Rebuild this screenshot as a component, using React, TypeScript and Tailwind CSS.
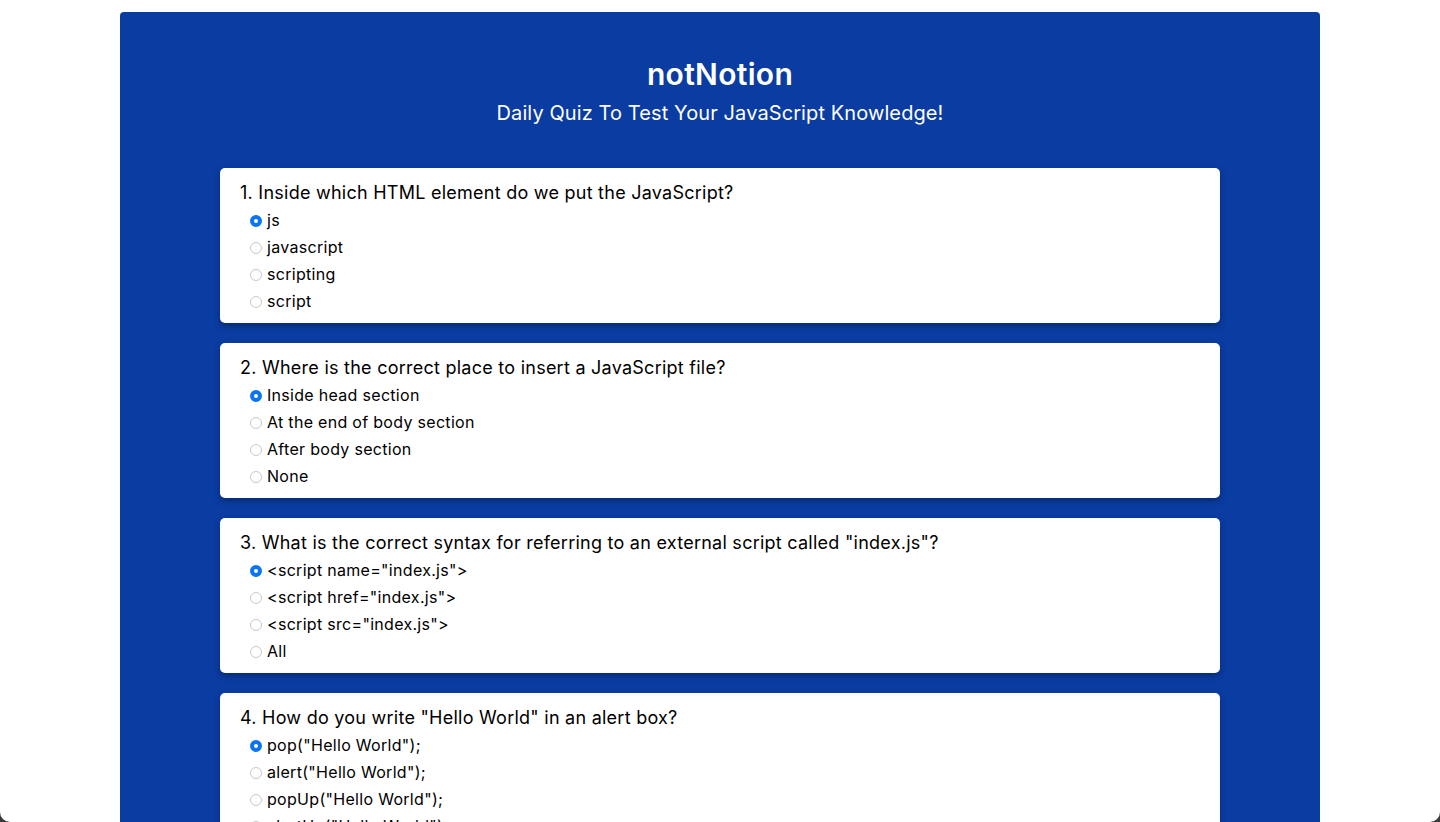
const questions = [
  {
    q: '1. Inside which HTML element do we put the JavaScript?',
    options: ['js', 'javascript', 'scripting', 'script'],
  },
  {
    q: '2. Where is the correct place to insert a JavaScript file?',
    options: ['Inside head section', 'At the end of body section', 'After body section', 'None'],
  },
  {
    q: '3. What is the correct syntax for referring to an external script called "index.js"?',
    options: ['<script name="index.js">', '<script href="index.js">', '<script src="index.js">', 'All'],
  },
  {
    q: '4. How do you write "Hello World" in an alert box?',
    options: ['pop("Hello World");', 'alert("Hello World");', 'popUp("Hello World");', 'alertUp("Hello World");'],
  },
];

function QuestionCard({ index, q, options }: { index: number; q: string; options: string[] }) {
  return (
    <div className="bg-white rounded-[5px] px-5 pt-[11px] pb-[9px] shadow-[0_3px_6px_rgba(0,0,0,0.3)]">
      <p className="text-[18px] leading-[27px] tracking-[0.25px] text-black">{q}</p>
      <div className="flex flex-col">
        {options.map((opt, i) => (
          <label key={opt} className="flex items-center h-[27px] text-[16px] tracking-[0.3px] text-black">
            <input
              type="radio"
              name={`q${index}`}
              defaultChecked={i === 0}
              className="appearance-none ml-[10px] mr-[5px] mt-[2px] w-[12px] h-[12px] rounded-full border border-[#c9c9c9] bg-white checked:border-[4px] checked:border-[#0a74f5] checked:bg-white"
            />
            <span>{opt}</span>
          </label>
        ))}
      </div>
    </div>
  );
}

export default function App() {
  return (
    <div className="min-h-screen bg-white pt-3 font-['Inter',sans-serif]">
      <div className="mx-auto w-[1200px] bg-[#0a3ca1] rounded-[4px] pt-10 pb-10">
        <h1 className="text-center text-white text-[30px] leading-[45px] font-semibold tracking-[0.3px]">notNotion</h1>
        <p className="text-center text-white text-[20px] leading-[30px] mt-[1px] tracking-[0.1px]">
          Daily Quiz To Test Your JavaScript Knowledge!
        </p>
        <div className="mx-auto w-[1000px] mt-10 flex flex-col gap-5">
          {questions.map((item, i) => (
            <QuestionCard key={i} index={i} q={item.q} options={item.options} />
          ))}
        </div>
      </div>
      <div className="fixed bottom-0 left-0 w-[10px] h-[10px] bg-[#3a3a3a]">
        <div className="w-full h-full bg-white rounded-bl-[10px]" />
      </div>
      <div className="fixed bottom-0 right-0 w-[10px] h-[10px] bg-[#3a3a3a]">
        <div className="w-full h-full bg-white rounded-br-[10px]" />
      </div>
    </div>
  );
}
